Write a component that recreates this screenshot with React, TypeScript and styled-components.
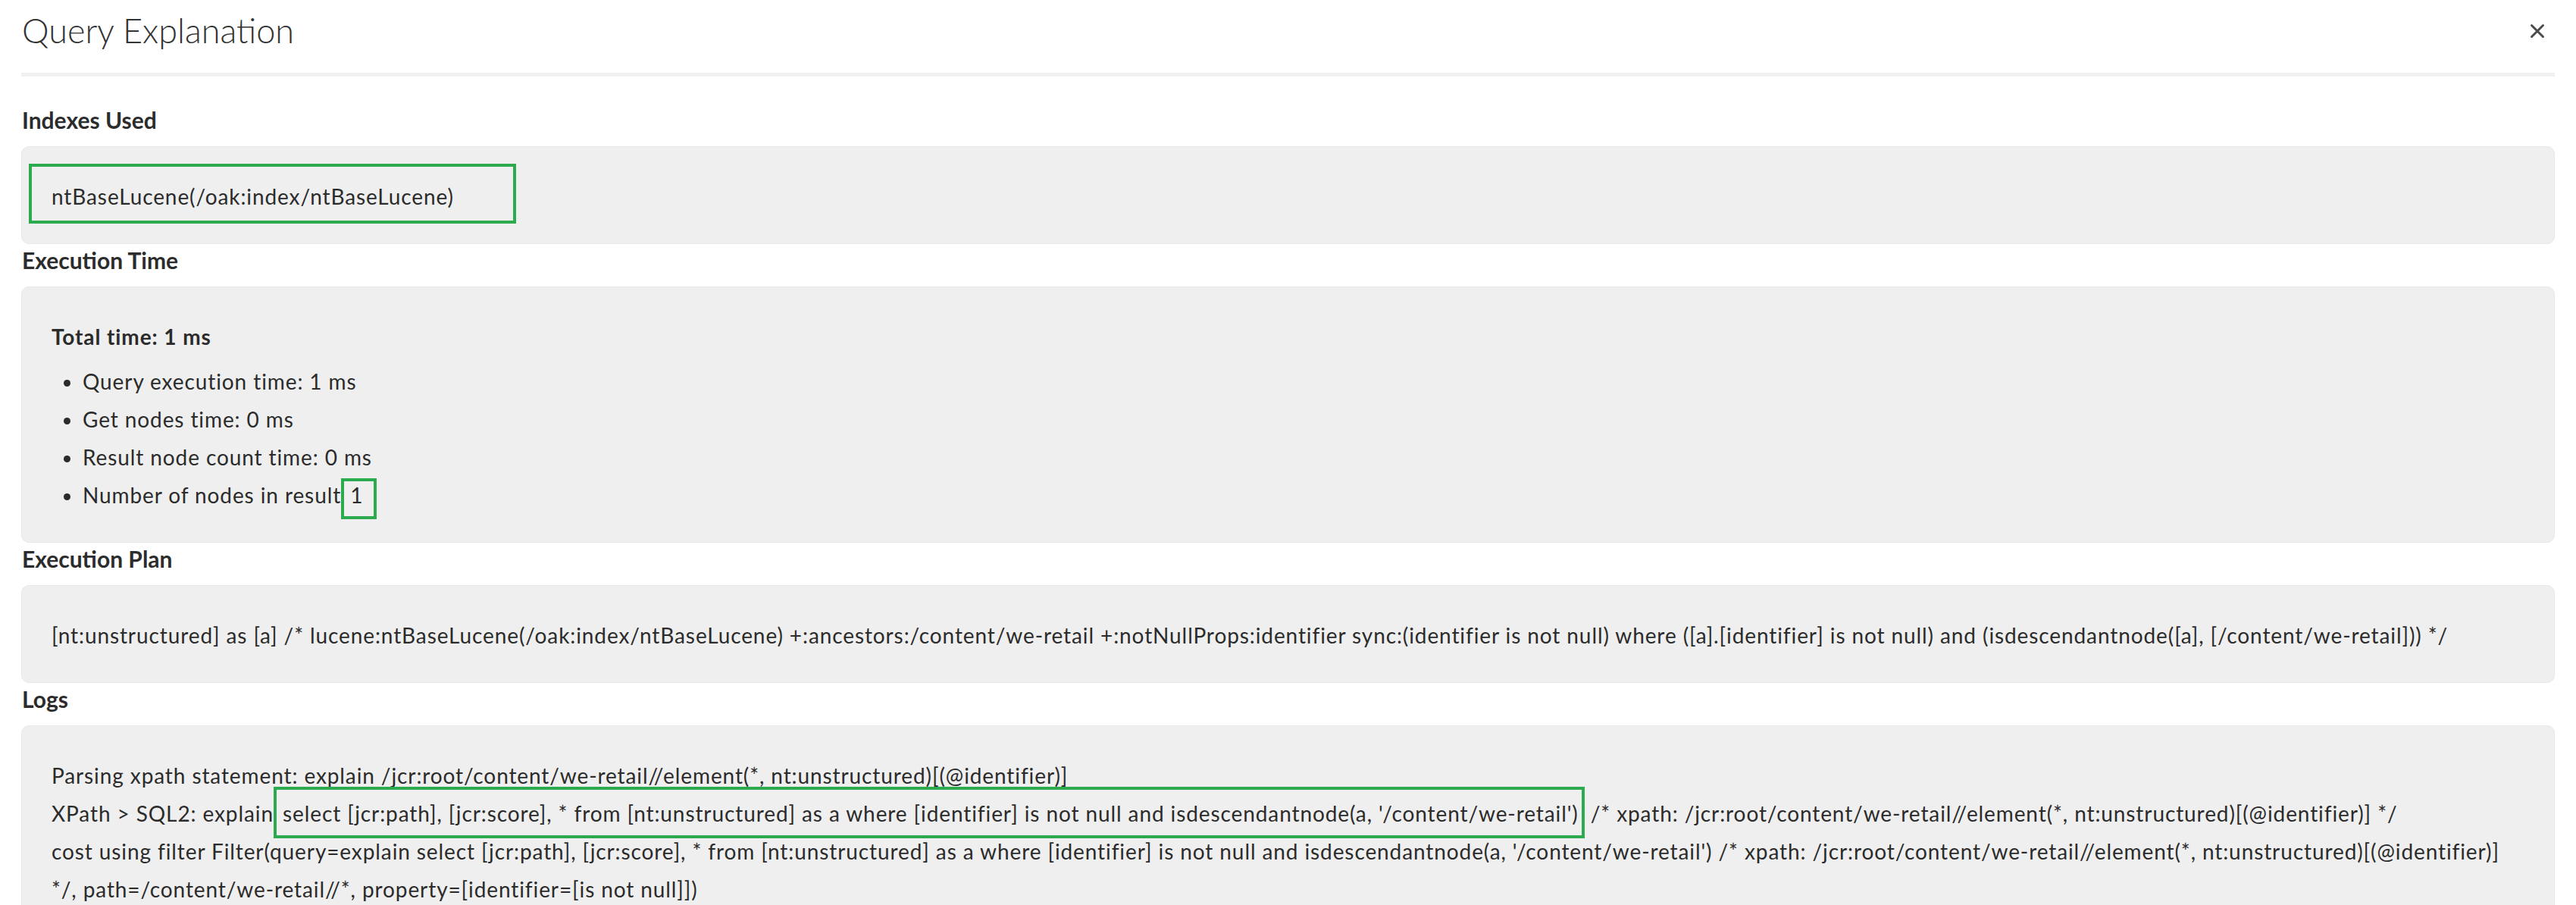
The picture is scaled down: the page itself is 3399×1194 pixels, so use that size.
import React from "react";
import styled, { createGlobalStyle } from "styled-components";

const GlobalStyle = createGlobalStyle`
  html, body {
    margin: 0;
    padding: 0;
    background: #ffffff;
    overflow: hidden;
  }
  body {
    font-family: Lato, "Open Sans", "Liberation Sans", sans-serif;
    color: #2b2b2b;
  }
`;

const Page = styled.div`
  padding: 0 28px;
`;

const Header = styled.header`
  display: flex;
  justify-content: space-between;
  align-items: flex-start;
  height: 96px;
  border-bottom: 5px solid #f0f0f0;
`;

const Title = styled.h1`
  margin: 10px 0 0 1px;
  font-size: 45px;
  line-height: 60px;
  font-weight: 300;
  color: #333333;
`;

const CloseButton = styled.button`
  margin: 31px 13px 0 0;
  padding: 0;
  border: none;
  background: none;
  color: #4b4b4b;
  cursor: pointer;
  display: flex;
`;

const Body = styled.main`
  padding-top: 36px;
`;

const Section = styled.section`
  display: flex;
  flex-direction: column;
`;

const SectionHeading = styled.h2`
  margin: 3px 0 17px 1px;
  font-size: 30px;
  line-height: 36px;
  font-weight: 700;
  color: #2c2c2c;
`;

const Well = styled.div`
  background: #efefef;
  border: 1px solid #e8e8e8;
  border-radius: 10px;
  padding: 40px 39px 37px;
  font-size: 28px;
  line-height: 50px;
  letter-spacing: 0.9px;
  color: #2b2b2b;
`;

// green call-out frame around a piece of text
const Mark = styled.span<{ $pad: string; $ml?: number }>`
  border: 4px solid #2bab4d;
  padding: ${(p) => p.$pad};
  margin-left: ${(p) => p.$ml ?? 0}px;
`;

const TotalLine = styled.div`
  font-weight: 700;
`;

const BulletList = styled.ul`
  margin: 9px 0 0;
  padding-left: 41px;
  list-style: disc;
`;

const LogLine = styled.div`
  white-space: nowrap;
`;

const CloseIcon = () => (
  <svg width="20" height="20" viewBox="0 0 20 20" aria-hidden="true">
    <path
      d="M2.5 2.5 L17.5 17.5 M17.5 2.5 L2.5 17.5"
      stroke="currentColor"
      strokeWidth="3"
      strokeLinecap="round"
    />
  </svg>
);

export default function App() {
  return (
    <Page>
      <GlobalStyle />
      <Header>
        <Title>Query Explanation</Title>
        <CloseButton aria-label="Close">
          <CloseIcon />
        </CloseButton>
      </Header>
      <Body>
        <Section>
          <SectionHeading>Indexes Used</SectionHeading>
          <Well>
            <Mark $pad="22px 78px 15px 26px" $ml={-30}>
              ntBaseLucene(/oak:index/ntBaseLucene)
            </Mark>
          </Well>
        </Section>
        <Section>
          <SectionHeading>Execution Time</SectionHeading>
          <Well>
            <TotalLine>Total time: 1 ms</TotalLine>
            <BulletList>
              <li>Query execution time: 1 ms</li>
              <li>Get nodes time: 0 ms</li>
              <li>Result node count time: 0 ms</li>
              <li>
                Number of nodes in result<Mark $pad="1px 14px 11px 0"> 1</Mark>
              </li>
            </BulletList>
          </Well>
        </Section>
        <Section>
          <SectionHeading>Execution Plan</SectionHeading>
          <Well>
            [nt:unstructured] as [a] /* lucene:ntBaseLucene(/oak:index/ntBaseLucene)
            +:ancestors:/content/we-retail +:notNullProps:identifier sync:(identifier is
            not null) where ([a].[identifier] is not null) and (isdescendantnode([a],
            [/content/we-retail])) */
          </Well>
        </Section>
        <Section>
          <SectionHeading>Logs</SectionHeading>
          <Well>
            <LogLine>
              Parsing xpath statement: explain
              /jcr:root/content/we-retail//element(*, nt:unstructured)[(@identifier)]
            </LogLine>
            <LogLine>
              XPath &gt; SQL2: explain
              <Mark $pad="14px 4px 12px 0">
                {" "}select [jcr:path], [jcr:score], * from [nt:unstructured] as a where
                [identifier] is not null and isdescendantnode(a, '/content/we-retail')
              </Mark>{" "}
              /* xpath: /jcr:root/content/we-retail//element(*, nt:unstructured)[(@identifier)] */
            </LogLine>
            <LogLine>
              cost using filter Filter(query=explain select [jcr:path], [jcr:score], * from
              [nt:unstructured] as a where [identifier] is not null and isdescendantnode(a,
              '/content/we-retail') /* xpath:
              /jcr:root/content/we-retail//element(*, nt:unstructured)[(@identifier)]
            </LogLine>
            <LogLine>*/, path=/content/we-retail//*, property=[identifier=[is not null]])</LogLine>
          </Well>
        </Section>
      </Body>
    </Page>
  );
}
